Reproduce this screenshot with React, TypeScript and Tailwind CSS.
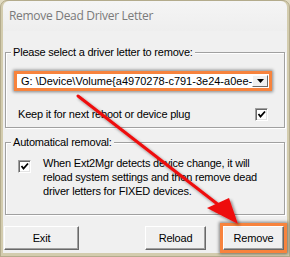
import type { ReactNode } from "react";

function CheckBox() {
  return (
    <span className="flex h-[13px] w-[13px] shrink-0 items-center justify-center border border-t-[#a0a0a0] border-l-[#a0a0a0] border-r-white border-b-white bg-white shadow-[inset_1px_1px_0_#696969,inset_-1px_-1px_0_#e3e3e3]">
      <svg width="9" height="9" viewBox="0 0 9 9">
        <polyline points="1.5,4 3.5,6.5 8,1.5" fill="none" stroke="black" strokeWidth="1.8" />
      </svg>
    </span>
  );
}

function GroupBox({ title, className, children }: { title: string; className: string; children: ReactNode }) {
  return (
    <fieldset
      className={`ml-[2px] w-[280px] border border-[#a0a0a0] shadow-[inset_1px_1px_0_#fff,1px_1px_0_#fff] ${className}`}
    >
      <legend className="ml-[5px] bg-[#f0f0f0] px-[2px] leading-[13px]">{title}</legend>
      {children}
    </fieldset>
  );
}

function Button({ label, className }: { label: string; className: string }) {
  return (
    <button
      className={`flex h-[24px] items-center justify-center border border-t-white border-l-white border-r-[#696969] border-b-[#696969] bg-[#f0f0f0] shadow-[inset_-1px_-1px_0_#a0a0a0] ${className}`}
    >
      {label}
    </button>
  );
}

export default function App() {
  return (
    <div className="relative h-[257px] w-[290px] overflow-hidden bg-gradient-to-b from-[#e2dcc4] to-[#a98d62] font-['Liberation_Sans',Arial,sans-serif] text-[11px] tracking-[-0.2px] text-black">
      <div className="flex h-full flex-col rounded-t-[7px] border border-[#b3ab8c] bg-[#d3ccae] px-[2px] pb-[3px]">
        <div className="flex h-[30px] items-center rounded-t-[6px] bg-gradient-to-b from-[#f5f5f5] to-[#eeeeee] pl-[6px] font-['Open_Sans',sans-serif] text-[12px] tracking-[-0.3px] text-[#7a7a7a]">
          Remove Dead Driver Letter
        </div>
        <div className="flex flex-1 flex-col bg-[#f0f0f0]">
          <GroupBox title="Please select a driver letter to remove:" className="mt-[15px]">
            <div className="pt-[12px] pb-[6px]">
              <div className="ml-[8px] flex h-[20px] w-[258px] items-stretch border-[3px] border-[#f7833d] bg-white shadow-[0_0_3px_1px_rgba(0,0,0,0.45)]">
                <span className="flex-1 overflow-hidden whitespace-nowrap pl-[4px] leading-[14px] tracking-normal">
                  G: \Device\Volume{"{"}a4970278-c791-3e24-a0ee-
                </span>
                <span className="my-[1px] mr-[1px] flex w-[16px] items-center justify-center border border-t-white border-l-white border-r-[#696969] border-b-[#696969] bg-[#f0f0f0]">
                  <svg width="7" height="4" viewBox="0 0 7 4">
                    <path d="M0 0 H7 L3.5 4 Z" fill="black" />
                  </svg>
                </span>
              </div>
              <div className="mt-[17px] flex h-[13px] items-center justify-between pl-[12px] pr-[16px]">
                <span>Keep it for next reboot or device plug</span>
                <CheckBox />
              </div>
            </div>
          </GroupBox>
          <GroupBox title="Automatical removal:" className="mt-[8px]">
            <div className="flex items-start pt-[7px] pb-[16px] pl-[12px]">
              <span className="mt-[4px]">
                <CheckBox />
              </span>
              <p className="ml-[12px] leading-[14px]">
                When Ext2Mgr detects device change, it will
                <br />
                reload system settings and then remove dead
                <br />
                driver letters for FIXED devices.
              </p>
            </div>
          </GroupBox>
          <div className="mt-[11px] flex">
            <Button label="Exit" className="ml-[1px] w-[75px]" />
            <Button label="Reload" className="ml-[66px] w-[61px]" />
            <div className="relative ml-[17px]">
              <Button label="Remove" className="w-[61px]" />
              <div className="pointer-events-none absolute -inset-[3px] border-[3px] border-[#f7833d] shadow-[0_0_3px_1px_rgba(0,0,0,0.45)]" />
            </div>
          </div>
        </div>
      </div>
      <svg className="pointer-events-none absolute inset-0" width="290" height="257" viewBox="0 0 290 257">
        <defs>
          <filter id="sh" x="-20%" y="-20%" width="140%" height="140%">
            <feDropShadow dx="2" dy="2" stdDeviation="1.5" floodColor="#000" floodOpacity="0.45" />
          </filter>
        </defs>
        <g filter="url(#sh)">
          <line x1="78" y1="96" x2="220" y2="206" stroke="#ee1111" strokeWidth="3" strokeLinecap="round" />
          <polygon points="238,224 207,208 229,198" fill="#ee1111" />
        </g>
      </svg>
    </div>
  );
}
